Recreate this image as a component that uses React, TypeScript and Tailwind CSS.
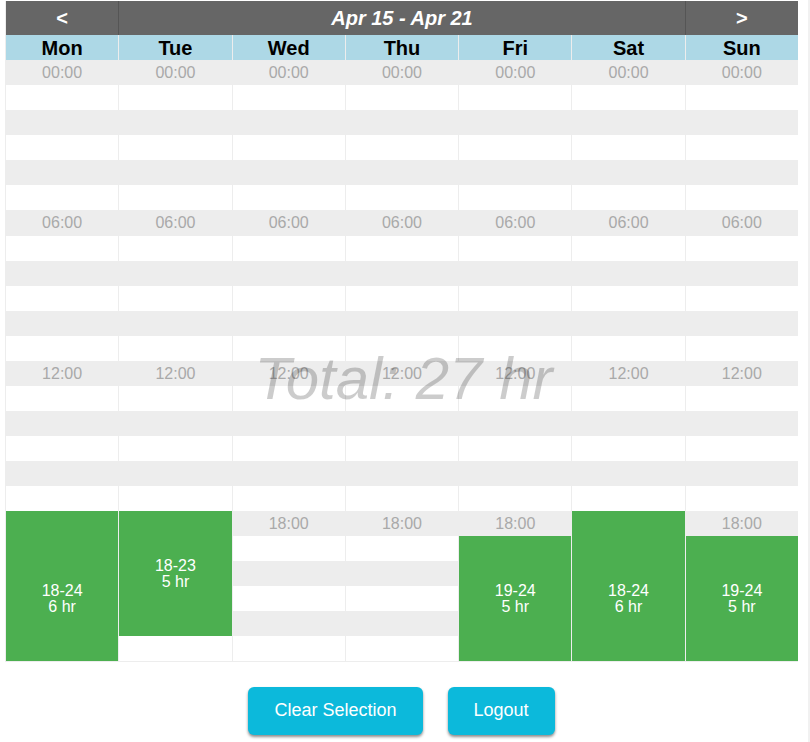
import React from "react";

type Shift = { start: number; end: number };

const days = ["Mon", "Tue", "Wed", "Thu", "Fri", "Sat", "Sun"];
const hours = Array.from({ length: 24 }, (_, i) => i);

const shifts: Record<string, Shift> = {
  Mon: { start: 18, end: 24 },
  Tue: { start: 18, end: 23 },
  Fri: { start: 19, end: 24 },
  Sat: { start: 18, end: 24 },
  Sun: { start: 19, end: 24 },
};

const total = Object.values(shifts).reduce((sum, s) => sum + s.end - s.start, 0);

function HourCell({ day, hour }: { day: string; hour: number }) {
  const shift = shifts[day];
  if (shift && hour > shift.start && hour < shift.end) return null;
  if (shift && hour === shift.start) {
    const length = shift.end - shift.start;
    return (
      <td
        rowSpan={length}
        className={`border-l border-[#ededed] bg-[#4caf50] px-0 pb-0 text-center align-middle text-base leading-4 text-white ${
          length > 5 ? "pt-[26px]" : "pt-0"
        }`}
      >
        {shift.start}-{shift.end}
        <br />
        {length} hr
      </td>
    );
  }
  return (
    <td
      className={`border-l border-[#ededed] p-0 text-center align-middle text-base leading-6 text-[#a9a9a9] ${
        hour % 2 === 0 ? "bg-[#ededed]" : "bg-white"
      }`}
    >
      {hour % 6 === 0 ? `${String(hour).padStart(2, "0")}:00` : null}
    </td>
  );
}

function ActionButton({ children }: { children: React.ReactNode }) {
  return (
    <button
      type="button"
      className="h-12 rounded-md bg-[#0cb9db] px-[26px] pb-0.5 text-lg text-white shadow-[0_2px_3px_rgba(0,0,0,0.45)]"
    >
      {children}
    </button>
  );
}

export default function App() {
  return (
    <main className="min-h-screen border-r-2 border-[#f1f1f1] bg-white pt-px pr-[10px] pl-[5px] font-['Liberation_Sans',Arial,sans-serif]">
      <div className="relative">
        <table className="w-full table-fixed border-separate border-spacing-0 border-b border-[#ededed]">
          <thead>
            <tr className="h-[34px] bg-[#666666] text-xl text-white">
              <th className="border-l border-[#ededed] p-0">
                <button type="button" aria-label="Previous week" className="h-[34px] w-full font-bold">
                  &lt;
                </button>
              </th>
              <th colSpan={5} className="border-l border-[#555555] p-0 font-bold italic">
                Apr 15 - Apr 21
              </th>
              <th className="border-l border-[#555555] p-0">
                <button type="button" aria-label="Next week" className="h-[34px] w-full font-bold">
                  &gt;
                </button>
              </th>
            </tr>
            <tr className="h-[25px] bg-[#add8e6] text-xl leading-6 text-black">
              {days.map((day) => (
                <th key={day} scope="col" className="border-l border-[#ededed] p-0 font-bold">
                  {day}
                </th>
              ))}
            </tr>
          </thead>
          <tbody>
            {hours.map((hour) => (
              <tr key={hour} className={hour === 6 ? "h-[26px]" : "h-[25px]"}>
                {days.map((day) => (
                  <HourCell key={day} day={day} hour={hour} />
                ))}
              </tr>
            ))}
          </tbody>
        </table>
        <div className="pointer-events-none absolute inset-x-0 top-[59px] bottom-0 flex items-center justify-center pt-9 pl-1 text-[60px] leading-none text-black/20 italic">
          <span>Total: {total} hr</span>
        </div>
      </div>
      <div className="flex justify-center gap-[25px] pt-[25px]">
        <ActionButton>Clear Selection</ActionButton>
        <ActionButton>Logout</ActionButton>
      </div>
    </main>
  );
}
